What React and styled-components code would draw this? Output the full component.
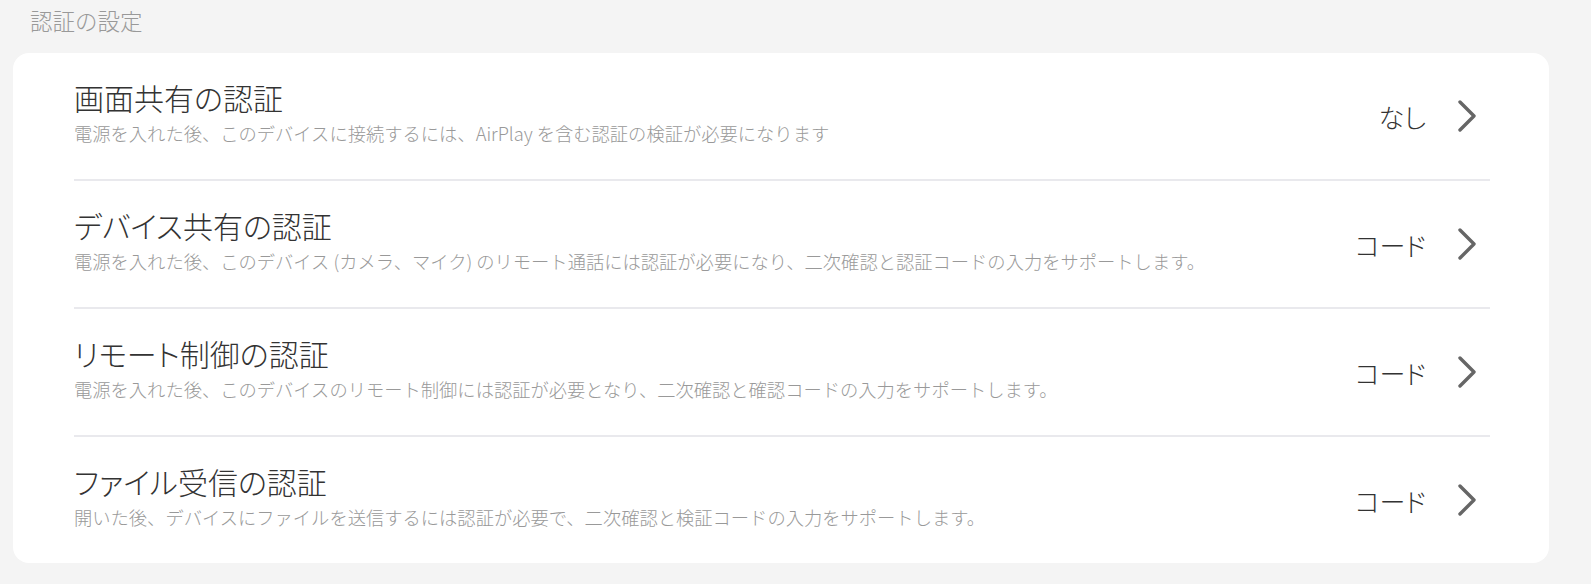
import React from 'react'
import styled, { createGlobalStyle } from 'styled-components'

const GlobalStyle = createGlobalStyle`
  html, body {
    margin: 0;
    padding: 0;
    background: #f4f4f4;
  }
  body {
    font-family: "Noto Sans CJK JP", "Noto Sans", sans-serif;
    font-weight: 300;
  }
`

const Page = styled.div`
  padding: 7px 42px 21px 13px;
`

const SectionTitle = styled.div`
  padding-left: 17px;
  font-size: 22.5px;
  line-height: 27px;
  color: #999;
  margin-bottom: 19px;
`

const Card = styled.div`
  background: #fff;
  border-radius: 16px;
  padding: 0 59px 0 61px;
`

const Row = styled.div`
  display: flex;
  align-items: center;
  height: 126px;
  border-bottom: ${p => (p.last ? 'none' : '2px solid #e9e9ed')};
  cursor: pointer;
`

const Texts = styled.div`
  flex: 1;
  display: flex;
  flex-direction: column;
  gap: 6px;
  padding-bottom: 7px;
`

const Title = styled.div`
  font-size: 30px;
  line-height: 34px;
  color: #333;
  font-feature-settings: "palt";
`

const Desc = styled.div`
  font-size: 18.3px;
  line-height: 26px;
  color: #999;
`

const Value = styled.div`
  display: flex;
  align-items: center;
  gap: 32px;
  padding-right: 14px;
  font-size: 26px;
  color: #333;
  font-feature-settings: "palt";
`

const Chevron = () => (
  <svg width="18" height="32" viewBox="0 0 18 32" fill="none">
    <path d="M2 2 L16 16 L2 30" stroke="#666" strokeWidth="3.4" strokeLinecap="round" strokeLinejoin="round" />
  </svg>
)

const items = [
  {
    title: '画面共有の認証',
    desc: '電源を入れた後、このデバイスに接続するには、AirPlay を含む認証の検証が必要になります',
    value: 'なし',
  },
  {
    title: 'デバイス共有の認証',
    desc: '電源を入れた後、このデバイス (カメラ、マイク) のリモート通話には認証が必要になり、二次確認と認証コードの入力をサポートします。',
    value: 'コード',
  },
  {
    title: 'リモート制御の認証',
    desc: '電源を入れた後、このデバイスのリモート制御には認証が必要となり、二次確認と確認コードの入力をサポートします。',
    value: 'コード',
  },
  {
    title: 'ファイル受信の認証',
    desc: '開いた後、デバイスにファイルを送信するには認証が必要で、二次確認と検証コードの入力をサポートします。',
    value: 'コード',
  },
]

export default function App() {
  return (
    <>
      <GlobalStyle />
      <Page>
        <SectionTitle>認証の設定</SectionTitle>
        <Card>
          {items.map((item, i) => (
            <Row key={item.title} last={i === items.length - 1}>
              <Texts>
                <Title>{item.title}</Title>
                <Desc>{item.desc}</Desc>
              </Texts>
              <Value>
                {item.value}
                <Chevron />
              </Value>
            </Row>
          ))}
        </Card>
      </Page>
    </>
  )
}
